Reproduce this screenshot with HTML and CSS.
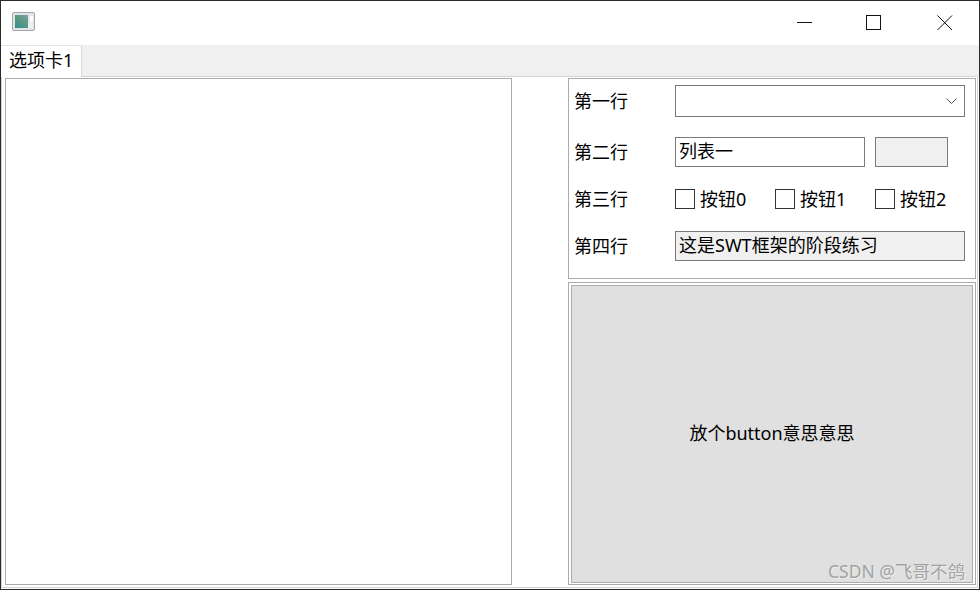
FILE: index.html
```html
<!DOCTYPE html>
<html lang="zh-CN">
<head>
    <meta charset="UTF-8">
    <title>选项卡</title>
    <link rel="stylesheet" href="styles.css">
</head>
<body>
    <div class="window">
        <div class="titlebar">
            <svg class="app-icon" width="24" height="20" viewBox="0 0 24 20">
                <defs>
                    <linearGradient id="pic" x1="0" y1="1" x2="1" y2="0">
                        <stop offset="0" stop-color="#2f8f93"/>
                        <stop offset="0.6" stop-color="#5f9a80"/>
                        <stop offset="1" stop-color="#7f9fb0"/>
                    </linearGradient>
                </defs>
                <rect x="0.5" y="0.5" width="22" height="18" rx="1.5" fill="#e2e5e6" stroke="#a3a6a8"/>
                <rect x="3" y="3" width="13" height="13" fill="url(#pic)"/>
                <rect x="18" y="4" width="3" height="6" fill="#ffffff"/>
                <rect x="16" y="11" width="5" height="5" fill="#eef0ee"/>
            </svg>
            <div class="window-btns">
                <svg width="16" height="16" viewBox="0 0 16 16"><path d="M0 7.5H15" stroke="#111" fill="none"/></svg>
                <svg width="16" height="16" viewBox="0 0 16 16"><rect x="0.5" y="0.5" width="14" height="14" stroke="#111" fill="none"/></svg>
                <svg class="btn-close" width="16" height="16" viewBox="0 0 16 16"><path d="M0.5 0.5L15 15M15 0.5L0.5 15" stroke="#111" fill="none"/></svg>
            </div>
        </div>

        <div class="tabbar">
            <div class="tab">选项卡1</div>
        </div>

        <div class="pane">
            <div class="canvas-panel"></div>
            <div class="side">
                <div class="form-group">
                    <div class="form-row row-one">
                        <span class="row-label">第一行</span>
                        <div class="combo">
                            <svg width="11" height="7" viewBox="0 0 11 7"><path d="M0.5 0.5L5.5 5.5L10.5 0.5" stroke="#555" fill="none"/></svg>
                        </div>
                    </div>
                    <div class="form-row row-two">
                        <span class="row-label">第二行</span>
                        <div class="text-field">列表一</div>
                        <div class="small-btn"></div>
                    </div>
                    <div class="form-row row-three">
                        <span class="row-label">第三行</span>
                        <div class="check"><span class="check-box"></span><span class="check-text">按钮0</span></div>
                        <div class="check"><span class="check-box"></span><span class="check-text">按钮1</span></div>
                        <div class="check"><span class="check-box"></span><span class="check-text">按钮2</span></div>
                    </div>
                    <div class="form-row row-four">
                        <span class="row-label">第四行</span>
                        <div class="readonly-field">这是SWT框架的阶段练习</div>
                    </div>
                </div>
                <div class="button-group">
                    <div class="big-btn">放个button意思意思</div>
                </div>
            </div>
        </div>

        <div class="watermark">CSDN @飞哥不鸽</div>
    </div>
</body>
</html>
```

FILE: styles.css
```css
* {
    box-sizing: border-box;
}
body {
    margin: 0;
    font-family: "Noto Sans", "Noto Sans CJK SC", sans-serif;
    font-size: 18px;
    color: #000;
    background: #fff;
}
.window {
    position: relative;
    width: 980px;
    height: 590px;
    border: 1px solid #2b2b2b;
    background: #fff;
    display: flex;
    flex-direction: column;
    overflow: hidden;
}
.titlebar {
    height: 44px;
    flex: none;
    display: flex;
    align-items: flex-start;
    justify-content: space-between;
    padding: 11px 0 0 11px;
}
.window-btns {
    display: flex;
    gap: 53px;
    padding: 3px 26px 0 0;
}
.window-btns svg {
    display: block;
}
.btn-close {
    margin-left: 2px;
}
.tabbar {
    height: 31px;
    flex: none;
    background: #f0f0f0;
    display: flex;
}
/* the selected tab hangs over the pane's top line */
.tab {
    position: relative;
    z-index: 1;
    width: 81px;
    height: 32px;
    background: #fff;
    border-right: 1px solid #d9d9d9;
    border-top: 1px solid #e4e4e4;
    padding-left: 8px;
    line-height: 29px;
    white-space: nowrap;
}
.pane {
    flex: 1;
    display: flex;
    justify-content: space-between;
    min-height: 0;
    margin: 0 1px 1px 0;
    padding: 1px 1px 2px 3px;
    border: 1px solid #d4d4d4;
}
.canvas-panel {
    width: 507px;
    border: 1px solid #ababab;
}
.side {
    width: 408px;
    display: flex;
    flex-direction: column;
    gap: 3px;
}
.form-group {
    height: 201px;
    flex: none;
    border: 1px solid #ababab;
    padding: 6px 0 0 5px;
}
.form-row {
    display: flex;
    align-items: center;
}
.row-one { height: 32px; }
.row-two { height: 30px; margin-top: 20px; }
.row-three { height: 20px; margin-top: 22px; }
.row-four { height: 30px; margin-top: 22px; }
.row-label {
    width: 101px;
    flex: none;
    padding-bottom: 2px;
    white-space: nowrap;
}
.combo {
    width: 290px;
    height: 32px;
    border: 1px solid #7a7a7a;
    display: flex;
    align-items: center;
    justify-content: flex-end;
    padding-right: 7px;
}
.text-field {
    width: 190px;
    height: 30px;
    border: 1px solid #7a7a7a;
    padding-left: 3px;
    line-height: 26px;
}
.small-btn {
    width: 73px;
    height: 30px;
    margin-left: 10px;
    border: 1px solid #7a7a7a;
    background: #f0f0f0;
}
.check {
    width: 100px;
    display: flex;
    align-items: center;
    gap: 5px;
    white-space: nowrap;
}
.check-box {
    width: 20px;
    height: 20px;
    flex: none;
    border: 1px solid #333;
    background: #fff;
}
.check-text {
    padding-bottom: 2px;
}
.readonly-field {
    width: 290px;
    height: 30px;
    border: 1px solid #7a7a7a;
    background: #f0f0f0;
    padding-left: 3px;
    line-height: 26px;
    white-space: nowrap;
}
.button-group {
    flex: 1;
    border: 1px solid #ababab;
    padding: 2px 2px 1px 2px;
    min-height: 0;
}
.big-btn {
    height: 100%;
    background: #e0e0e0;
    border: 1px solid #adadad;
    padding-bottom: 4px;
    display: flex;
    align-items: center;
    justify-content: center;
}
.watermark {
    position: absolute;
    right: 14px;
    bottom: 6px;
    font-size: 17.5px;
    color: #a3a3a3;
    text-shadow: 1px 1px 0 #eeeeee;
    white-space: nowrap;
}
```
